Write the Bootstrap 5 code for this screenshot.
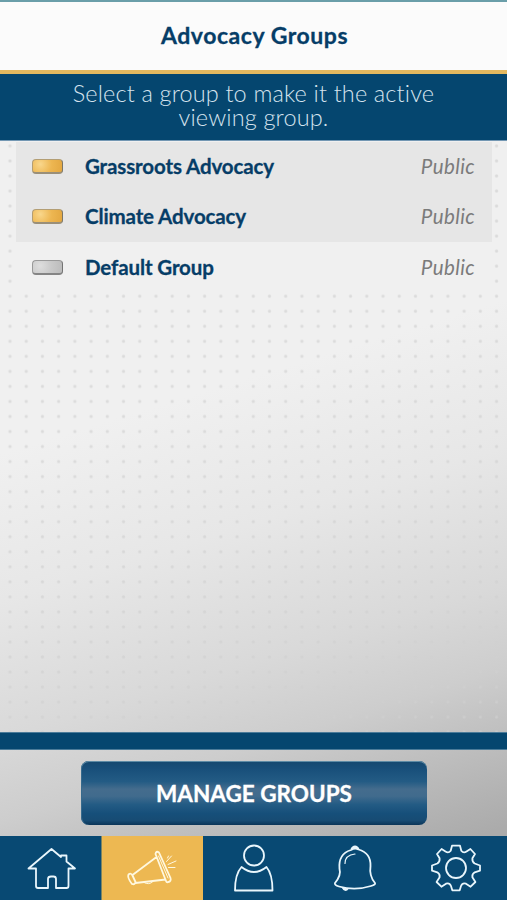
<!DOCTYPE html>
<html lang="en">
<head>
<meta charset="utf-8">
<meta name="viewport" content="width=device-width, initial-scale=1">
<title>Advocacy Groups</title>
<link rel="stylesheet" href="https://cdn.jsdelivr.net/npm/bootstrap@5.3.0/dist/css/bootstrap.min.css">
<style>
:root { --navy: #05466f; --gold: #edb852; }
body {
  height: 900px; overflow: hidden; color: #063d67;
  font-family: Lato, "Open Sans", sans-serif;
  background: linear-gradient(163deg, #f0f0f0 0, #f0f0f0 43%, #e7e7e7 57%, #d9d9d9 70%, #cdcdcd 78%, #bfbfbf 84%, #ababab 93%);
}
.dots {
  background-image: radial-gradient(circle at 50% 50%, rgba(208,208,208,.75) 0, rgba(208,208,208,.55) 1.1px, rgba(208,208,208,0) 2.1px);
  background-size: 16.22px 15.04px;
  background-position: 1.9px -2.6px;
}
.topbar { height: 74px; background: #fbfbfb; border-top: 2px solid #6a9ea9; border-bottom: 4px solid #e4b85f; }
.topbar h1 { font-size: 23px; font-weight: 700; margin: 0 0 0 2px; letter-spacing: .55px; -webkit-text-stroke: .3px; }
.notice { height: 67px; background: var(--navy); color: #d5e3ee; border-bottom: 1px solid #7397b3; padding-top: 8px; }
.notice span { display: block; font-size: 23.5px; font-weight: 300; line-height: 23.5px; letter-spacing: .15px; }
.groups { margin: 1px 15px 0 16px; }
.groups .list-group-item { height: 50px; padding: 0 17px 1px 16px; border: 0; background: #f0f0f0; color: inherit; }
.groups .list-group-item:last-child { padding-bottom: 0; padding-top: 1px; }
.groups .chosen { background: #e6e6e6; }
.gname { font-size: 20.5px; font-weight: 700; letter-spacing: -.12px; -webkit-text-stroke: .3px; margin-bottom: 1px; }
.gkind { font-size: 20.5px; font-style: italic; color: #7b7b7b; letter-spacing: .4px; margin-bottom: 1px; }
.pill { width: 31px; height: 15px; border-radius: 4px; margin-right: 22px; border: 1px solid #b39e74; border-right-color: #7b7565; border-bottom: 2px solid #9a8f79; background: radial-gradient(circle at 25% 35%, #f9d78c, #edb651 50%, #e3a740); }
.pill.off { border-color: #999 #737373 #858585 #999; background: radial-gradient(circle at 25% 40%, #dedede, #c9c9c9 50%, #bbb); }
.divider { height: 18px; background: var(--navy); border-top: 1px solid #4b7b99; border-bottom: 1px solid #4b7b99; }
.actions { height: 86px; padding: 11px 80px 11px 81px; }
.manage { --bs-btn-color: #fff; --bs-btn-hover-color: #fff; height: 64px; border: 0; border-radius: 8px; font-size: 22.5px; font-weight: 700; padding: 1px 0 0; -webkit-text-stroke: .3px;
  background: linear-gradient(#15486f 0, #184f7a 12%, #235b84 32%, #446c8d 44%, #416b8d 55%, #235b84 68%, #164f7a 82%, #174b73 93%, #0b3558 100%);
  box-shadow: inset 0 1px #5e8ba5, inset 1px 0 #376a8d; }
.tabs { height: 64px; background: #084973; }
.tabs a { flex: 1 1 0; color: #fff; }
.tabs .current { background: var(--gold); border-left: 1px solid #7b8463; }
.tabs svg { width: 60px; height: 64px; fill: none; stroke: #e9f6fc; stroke-width: 1.8; stroke-linejoin: round; stroke-linecap: round; }
.tabs .current svg { stroke: #fff8df; margin-right: 2px; }
</style>
</head>
<body class="d-flex flex-column">
<header class="topbar d-flex align-items-center justify-content-center flex-shrink-0"><h1>Advocacy Groups</h1></header>
<p class="notice text-center mb-0 flex-shrink-0"><span>Select a group to make it the active</span> <span>viewing group.</span></p>
<main class="dots flex-grow-1">
  <ul class="groups list-group rounded-0">
    <li class="list-group-item chosen d-flex align-items-center"><span class="pill"></span><span class="gname">Grassroots Advocacy</span><span class="gkind ms-auto">Public</span></li>
    <li class="list-group-item chosen d-flex align-items-center"><span class="pill"></span><span class="gname">Climate Advocacy</span><span class="gkind ms-auto">Public</span></li>
    <li class="list-group-item d-flex align-items-center"><span class="pill off"></span><span class="gname">Default Group</span><span class="gkind ms-auto">Public</span></li>
  </ul>
</main>
<div class="divider flex-shrink-0"></div>
<div class="actions flex-shrink-0"><button type="button" class="manage btn w-100">MANAGE GROUPS</button></div>
<nav class="tabs d-flex flex-shrink-0" aria-label="Main">
  <a href="#" class="d-flex justify-content-center" aria-label="Home"><svg viewBox="0 0 60 64"><path d="M7.5 32.500 30.500 13 40 21V19.500H45.500V25.500L54 32.500H47.500V50Q47.500 52 45.500 52H35V43Q35 40.500 32.500 40.500H30Q27 40.500 27 43V52H17Q15 52 15 50V32.500Z"/></svg></a>
  <a href="#" class="current d-flex justify-content-center" aria-label="Advocacy"><svg viewBox="0 0 60 64"><path d="M33.500 18Q34 14.500 37 16.500L48.500 42Q49.500 45.500 46 46.200Q44.500 46.500 44 45ZM34.500 21 10.500 39M13.500 47 43.500 43.500M6.500 38.500Q9 36.500 10.500 39.500L13.500 46Q13 49 10 48Q5 41.500 6.500 38.500Z"/><path stroke-width="1" d="M22 46.500Q27 49.500 31 45.500M36.500 20 46 42M44.500 25.500 49.500 20M46 28.500 54 25M46.500 31.500H53M45.500 22 46.500 20"/></svg></a>
  <a href="#" class="d-flex justify-content-center" aria-label="Profile"><svg viewBox="0 0 60 64"><circle cx="30" cy="19.500" r="10"/><path d="M17.500 31Q30 41 42.500 31Q48.500 38 48.500 54.500H11Q11 38 17.500 31Z"/></svg></a>
  <a href="#" class="d-flex justify-content-center" aria-label="Alerts"><svg viewBox="0 0 60 64"><path d="M26 14Q13 18 14.500 33Q16.500 39 10 47Q9 49 14 50.500Q30 55 46 50Q51 48.500 50 47Q44 40 45.500 30Q46 17 33.500 13.500Q30 11.500 26 14Z"/><path stroke-width="1.2" d="M20 27.500Q20 19 30 18"/><path d="M25.500 13Q27 9.500 30 9.500T34.500 13ZM16.500 51.500Q20 58 24 52.500Z" fill="#e9f6fc" stroke="none"/></svg></a>
  <a href="#" class="d-flex justify-content-center" aria-label="Settings"><svg viewBox="0 0 60 64"><circle cx="30" cy="32" r="10"/><path d="M26 9.700H34L35.300 14.700Q37.500 17.500 40.500 15.500L44.400 13 49 18 46.400 22.300Q46 25.800 48.700 27.500L54 29.500V34.700L48.700 36.300Q45.800 38 46.400 41.300L49.400 46 44.600 50.700 40 47.700Q36.500 46.500 35 50L33.700 54.300H26.300L25 50Q23.500 46.500 20 47.700L15.400 50.700 10.600 46 13.600 41.300Q14.200 38 11.300 36.300L6 34.700V29.500L11.300 27.500Q14 25.800 13.600 22.300L11 18 15.600 13 19.500 15.500Q22.500 17.500 24.700 14.700Z"/></svg></a>
</nav>
<script src="https://cdn.jsdelivr.net/npm/bootstrap@5.3.0/dist/js/bootstrap.bundle.min.js"></script>
</body>
</html>
